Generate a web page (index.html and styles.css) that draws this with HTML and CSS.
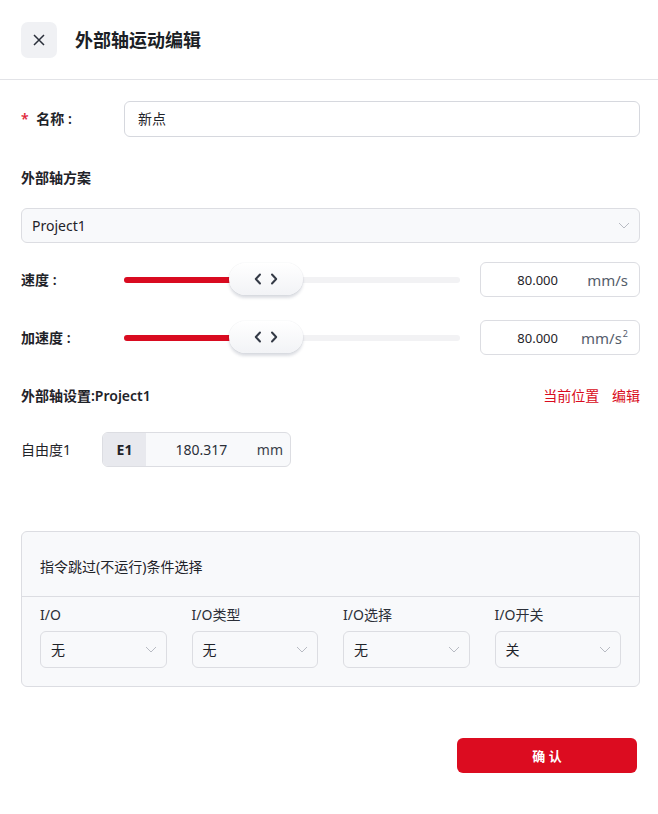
FILE: index.html
```
<!DOCTYPE html>
<html lang="zh-CN">
<head>
    <meta charset="UTF-8">
    <meta name="viewport" content="width=device-width, initial-scale=1.0">
    <title>外部轴运动编辑</title>
    <link rel="stylesheet" href="styles.css">
</head>
<body>
    <div class="header">
        <div class="close-btn">
            <svg width="14" height="14" viewBox="0 0 14 14"><path d="M2 2 L12 12 M12 2 L2 12" stroke="#2a2f3a" stroke-width="1.5" fill="none"/></svg>
        </div>
        <h2 class="title">外部轴运动编辑</h2>
    </div>

    <div class="content">
        <div class="form-row name-row">
            <label class="row-label strong"><span class="req">*</span> 名称 :</label>
            <div class="text-input">新点</div>
        </div>

        <div class="section-title">外部轴方案</div>
        <div class="select wide">
            <span>Project1</span>
            <svg class="chev" width="12" height="7" viewBox="0 0 12 7"><path d="M1 1 L6 6 L11 1" stroke="#b8bbc3" stroke-width="1" fill="none"/></svg>
        </div>

        <div class="form-row slider-row speed">
            <label class="row-label strong">速度 :</label>
            <div class="slider">
                <div class="track"><div class="fill" style="width: 32%"></div></div>
                <div class="thumb" style="left: 105px">
                    <svg width="24" height="12" viewBox="0 0 24 12"><path d="M6 1.5 L1.8 6 L6 10.5 M18 1.5 L22.2 6 L18 10.5" stroke="#343a46" stroke-width="2" fill="none" stroke-linecap="round" stroke-linejoin="round"/></svg>
                </div>
            </div>
            <div class="num-input">
                <span class="num">80.000</span>
                <span class="unit">mm/s</span>
            </div>
        </div>

        <div class="form-row slider-row accel">
            <label class="row-label strong">加速度 :</label>
            <div class="slider">
                <div class="track"><div class="fill" style="width: 32%"></div></div>
                <div class="thumb" style="left: 105px">
                    <svg width="24" height="12" viewBox="0 0 24 12"><path d="M6 1.5 L1.8 6 L6 10.5 M18 1.5 L22.2 6 L18 10.5" stroke="#343a46" stroke-width="2" fill="none" stroke-linecap="round" stroke-linejoin="round"/></svg>
                </div>
            </div>
            <div class="num-input">
                <span class="num">80.000</span>
                <span class="unit">mm/s<sup>2</sup></span>
            </div>
        </div>

        <div class="axis-head">
            <span class="section-title inline">外部轴设置<span class="plain">:Project1</span></span>
            <div class="links">
                <a href="#">当前位置</a>
                <a href="#">编辑</a>
            </div>
        </div>

        <div class="form-row dof-row">
            <label class="dof-label">自由度1</label>
            <div class="dof-input">
                <span class="tag">E1</span>
                <span class="dof-val">180.317</span>
                <span class="dof-unit">mm</span>
            </div>
        </div>

        <div class="card">
            <div class="card-title">指令跳过(不运行)条件选择</div>
            <div class="card-body">
                <div class="field">
                    <div class="field-label">I/O</div>
                    <div class="select">
                        <span>无</span>
                        <svg class="chev" width="12" height="7" viewBox="0 0 12 7"><path d="M1 1 L6 6 L11 1" stroke="#b8bbc3" stroke-width="1" fill="none"/></svg>
                    </div>
                </div>
                <div class="field">
                    <div class="field-label">I/O类型</div>
                    <div class="select">
                        <span>无</span>
                        <svg class="chev" width="12" height="7" viewBox="0 0 12 7"><path d="M1 1 L6 6 L11 1" stroke="#b8bbc3" stroke-width="1" fill="none"/></svg>
                    </div>
                </div>
                <div class="field">
                    <div class="field-label">I/O选择</div>
                    <div class="select">
                        <span>无</span>
                        <svg class="chev" width="12" height="7" viewBox="0 0 12 7"><path d="M1 1 L6 6 L11 1" stroke="#b8bbc3" stroke-width="1" fill="none"/></svg>
                    </div>
                </div>
                <div class="field">
                    <div class="field-label">I/O开关</div>
                    <div class="select">
                        <span>关</span>
                        <svg class="chev" width="12" height="7" viewBox="0 0 12 7"><path d="M1 1 L6 6 L11 1" stroke="#b8bbc3" stroke-width="1" fill="none"/></svg>
                    </div>
                </div>
            </div>
        </div>

        <div class="footer">
            <button class="confirm-btn">确 认</button>
        </div>
    </div>
</body>
</html>
```

FILE: styles.css
```
body {
    font-family: "Noto Sans", "Noto Sans CJK SC", sans-serif;
    background-color: #fff;
    color: #1f2329;
    margin: 0;
    padding: 0;
    font-size: 14px;
    line-height: 20px;
}
.header {
    height: 79px;
    display: flex;
    align-items: center;
    padding: 0 21px;
    gap: 18px;
    border-bottom: 1px solid #e2e3e7;
}
.close-btn {
    width: 36px;
    height: 36px;
    border-radius: 7px;
    background-color: #f0f1f4;
    display: flex;
    align-items: center;
    justify-content: center;
}
.title {
    margin: 0;
    font-size: 18px;
    font-weight: 700;
    color: #1c1f26;
}
.content {
    padding: 0 18px 0 21px;
}
.form-row {
    display: flex;
    align-items: center;
}
.row-label {
    width: 103px;
    flex-shrink: 0;
}
.strong {
    font-weight: 600;
}
.req {
    color: #e0283a;
    margin-right: 4px;
}
.name-row {
    margin-top: 21px;
}
.text-input {
    flex: 1;
    height: 34px;
    border: 1px solid #d6d8de;
    border-radius: 6px;
    padding: 0 13px;
    display: flex;
    align-items: center;
}
.section-title {
    font-weight: 700;
    margin-top: 31px;
}
.section-title.inline {
    margin-top: 0;
}
.plain {
    font-weight: 600;
}
.select {
    height: 34px;
    border: 1px solid #dcdde2;
    border-radius: 6px;
    background-color: #f8f9fb;
    display: flex;
    align-items: center;
    justify-content: space-between;
    padding: 0 9px 0 10px;
}
.select.wide {
    margin-top: 20px;
    height: 33px;
}
.chev {
    flex-shrink: 0;
}
.slider-row.speed {
    margin-top: 19px;
}
.slider-row.accel {
    margin-top: 23px;
}
.slider {
    flex: 1;
    position: relative;
    height: 35px;
    margin-right: 20px;
    display: flex;
    align-items: center;
}
.track {
    width: 100%;
    height: 6px;
    border-radius: 3px;
    background-color: #f2f2f4;
}
.fill {
    height: 100%;
    border-radius: 3px;
    background-color: #d90b20;
}
.thumb {
    position: absolute;
    top: 1px;
    width: 74px;
    height: 32px;
    border-radius: 16px;
    background: linear-gradient(#ffffff, #f2f3f6);
    box-shadow: 0 3px 3px rgba(40, 50, 80, 0.16), 0 0 1px rgba(40, 50, 80, 0.2);
    display: flex;
    align-items: center;
    justify-content: center;
}
.num-input {
    border: 1px solid #dcdde2;
    border-radius: 6px;
    display: flex;
    align-items: center;
    padding-right: 11px;
    box-sizing: border-box;
    width: 160px;
    height: 35px;
}
.num {
    flex: 1;
    text-align: right;
    font-size: 13px;
    color: #1f2329;
}
.unit {
    width: 70px;
    text-align: right;
    font-size: 15px;
    color: #555d6b;
}
.unit sup {
    font-size: 9px;
    line-height: 0;
    vertical-align: 7px;
    margin-left: 1px;
}
.axis-head {
    display: flex;
    justify-content: space-between;
    align-items: center;
    margin-top: 31px;
}
.links a {
    color: #d90b20;
    text-decoration: none;
    margin-left: 9px;
}
.dof-row {
    margin-top: 26px;
}
.dof-label {
    width: 81px;
}
.dof-input {
    width: 189px;
    height: 35px;
    box-sizing: border-box;
    border: 1px solid #dcdde2;
    border-radius: 6px;
    background-color: #f8f9fb;
    display: flex;
    align-items: center;
    overflow: hidden;
}
.tag {
    width: 43px;
    height: 100%;
    background-color: #e8e9ee;
    display: flex;
    align-items: center;
    justify-content: center;
    font-weight: 700;
}
.dof-val {
    flex: 1;
    text-align: center;
    color: #2b2f38;
}
.dof-unit {
    padding-right: 7px;
    color: #3a3f4a;
}
.card {
    margin-top: 64px;
    border: 1px solid #dcdde2;
    border-radius: 6px;
    background-color: #f8f9fb;
}
.card-title {
    padding: 25px 18px 19px;
    border-bottom: 1px solid #dcdde2;
}
.card-body {
    display: grid;
    grid-template-columns: repeat(4, 1fr);
    column-gap: 25px;
    padding: 8px 18px 18px;
}
.field-label {
    margin-bottom: 6px;
    color: #2b2f38;
}
.field .select {
    height: 35px;
}
.footer {
    display: flex;
    justify-content: flex-end;
    margin-top: 51px;
    padding-right: 3px;
}
.confirm-btn {
    width: 180px;
    height: 35px;
    border: none;
    border-radius: 6px;
    background-color: #dc0c20;
    color: #fff;
    font-family: "Noto Sans", "Noto Sans CJK SC", sans-serif;
    font-size: 13px;
    font-weight: 600;
    cursor: pointer;
}
```
